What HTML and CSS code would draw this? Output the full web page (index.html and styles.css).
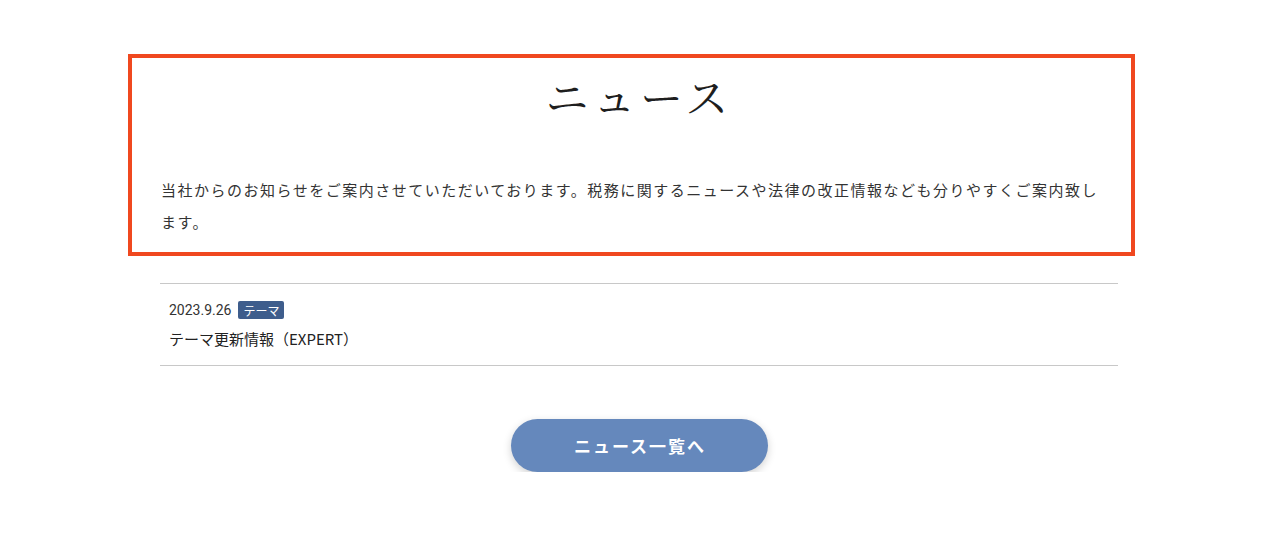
FILE: index.html
```html
<!DOCTYPE html>
<html lang="ja">
<head>
<meta charset="utf-8">
<title>ニュース</title>
<link rel="stylesheet" href="styles.css">
</head>
<body>
<main class="news">
  <section class="intro">
    <h2 class="intro-title">ニュース</h2>
    <p class="intro-text">当社からのお知らせをご案内させていただいております。税務に関するニュースや法律の改正情報なども分りやすくご案内致します。</p>
  </section>
  <ul class="news-list">
    <li class="news-item">
      <div class="news-meta">
        <span class="news-date">2023.9.26</span>
        <span class="news-tag">テーマ</span>
      </div>
      <div class="news-title">テーマ更新情報（EXPERT）</div>
    </li>
  </ul>
  <div class="more">
    <a class="more-btn" href="#">ニュース一覧へ</a>
  </div>
</main>
</body>
</html>
```

FILE: styles.css
```css
* { box-sizing: border-box; }
html, body { margin: 0; padding: 0; background: #fff; }
body {
  font-family: "Noto Sans CJK JP", "Noto Sans", sans-serif;
  color: #333;
}
.news {
  width: 958px;
  margin: 0 0 0 160px;
  padding-top: 54px;
}
.intro {
  margin: 0 -17px 0 -32px;
  border: 4px solid #f0481f;
  padding: 8px 22px 14px 29px;
}
.intro-title {
  margin: 0;
  font-family: "Noto Serif CJK JP", "Noto Sans CJK JP", serif;
  font-weight: 400;
  font-size: 43px;
  line-height: 60px;
  letter-spacing: 0.1em;
  text-align: center;
  color: #1e1e1e;
  padding-left: 8px;
}
.intro-text {
  margin: 48px 0 0;
  font-size: 15px;
  line-height: 32px;
  letter-spacing: 1.5px;
  color: #333;
}
.news-list {
  list-style: none;
  margin: 27px 0 0;
  padding: 0;
}
.news-item {
  border-top: 1px solid #c8c8c8;
  border-bottom: 1px solid #c8c8c8;
  padding: 16px 9px 14px;
}
.news-meta {
  display: flex;
  align-items: center;
  gap: 7px;
  height: 20px;
}
.news-date {
  font-family: Roboto, "Noto Sans CJK JP", sans-serif;
  font-size: 14px;
  color: #333;
}
.news-tag {
  display: inline-flex;
  align-items: center;
  justify-content: center;
  height: 18px;
  padding: 0 5px;
  background: #3e5d8c;
  color: #fff;
  font-size: 12px;
  border-radius: 2px;
}
.news-title {
  margin-top: 7px;
  font-size: 15px;
  line-height: 24px;
  color: #222;
}
.more {
  display: flex;
  justify-content: center;
  margin-top: 53px;
}
.more-btn {
  display: flex;
  align-items: center;
  justify-content: center;
  width: 257px;
  height: 53px;
  border-radius: 27px;
  background: #6588bc;
  color: #fff;
  text-decoration: none;
  font-size: 17px;
  font-weight: 700;
  letter-spacing: 2px;
  padding-left: 2px;
  box-shadow: 0 3px 8px rgba(0, 0, 0, 0.18);
}
```
